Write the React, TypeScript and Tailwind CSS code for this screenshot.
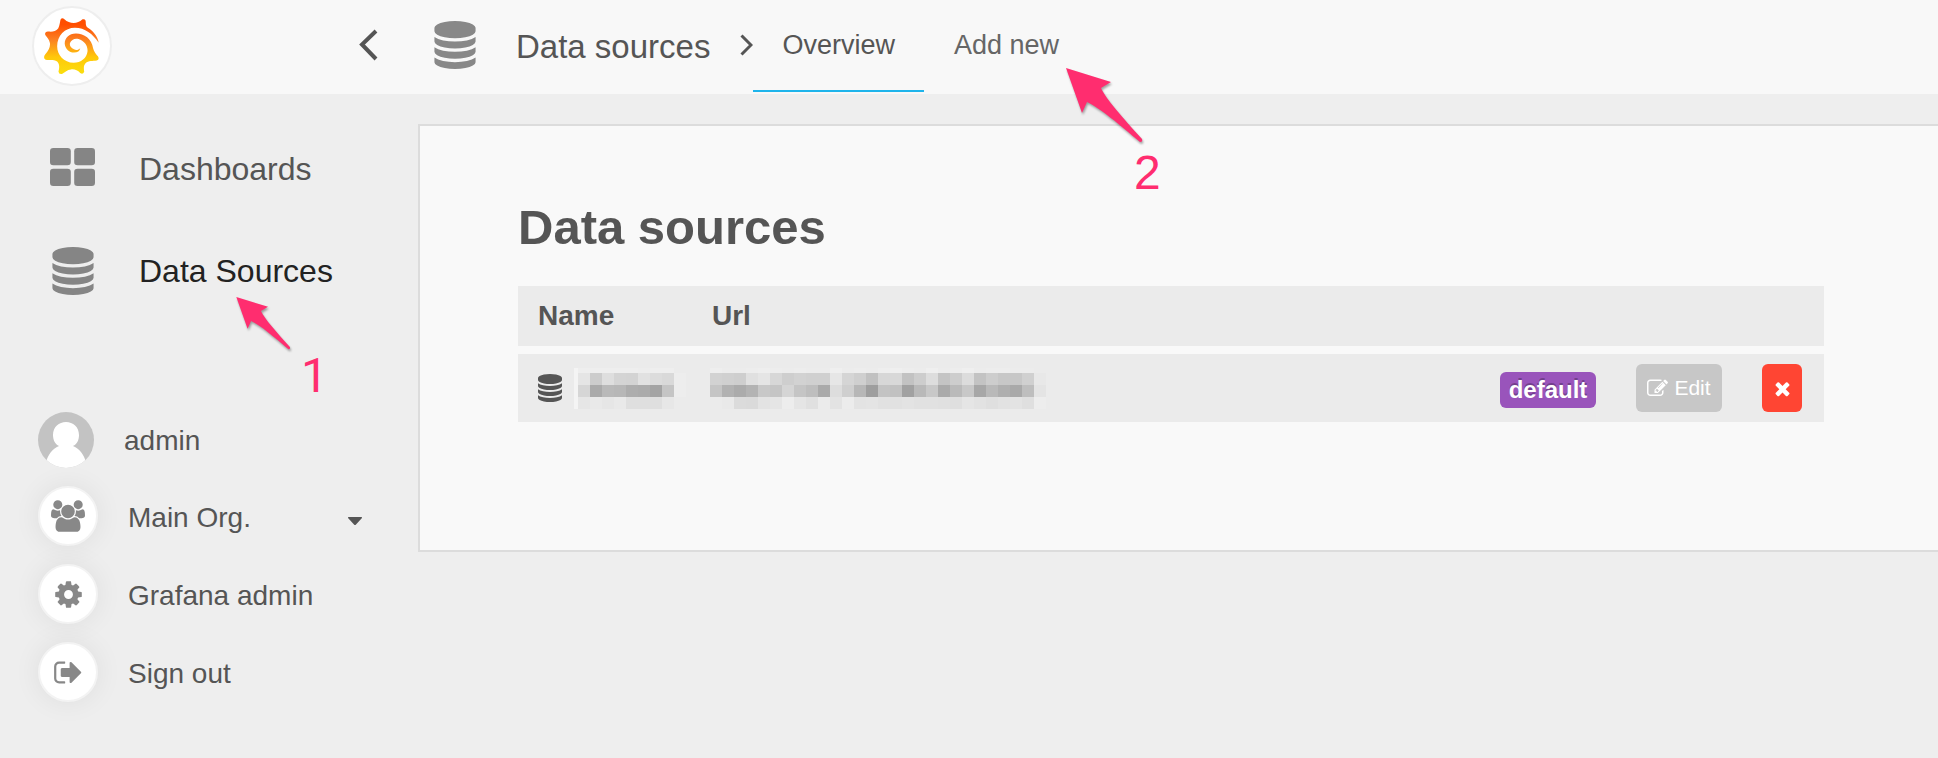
import type { ReactNode } from "react";

const databasePath =
  "M768 768q237 0 443-43t325-127v170q0 69-103 128t-280 93.5-385 34.5-385-34.5-280-93.5-103-128v-170q119 84 325 127t443 43zm0 768q237 0 443-43t325-127v170q0 69-103 128t-280 93.5-385 34.5-385-34.5-280-93.5-103-128v-170q119 84 325 127t443 43zm0-384q237 0 443-43t325-127v170q0 69-103 128t-280 93.5-385 34.5-385-34.5-280-93.5-103-128v-170q119 84 325 127t443 43zm0-1152q208 0 385 34.5t280 93.5 103 128v128q0 69-103 128t-280 93.5-385 34.5-385-34.5-280-93.5-103-128v-128q0-69 103-128t280-93.5 385-34.5z";
const usersPath =
  "M529 896q-162 5-265 128h-134q-82 0-138-40.5t-56-118.5q0-353 124-353 6 0 43.5 21t97.5 42.5 119 21.5q67 0 133-23-5 37-5 66 0 139 81 256zm1071 637q0 120-73 189.5t-194 69.5h-874q-121 0-194-69.5t-73-189.5q0-53 3.5-103.5t14-109 26.5-108.5 43-97.5 62-81 85.5-53.5 111.5-20q10 0 43 21.5t73 48 107 48 135 21.5 135-21.5 107-48 73-48 43-21.5q61 0 111.5 20t85.5 53.5 62 81 43 97.5 26.5 108.5 14 109 3.5 103.5zm-1024-1277q0 106-75 181t-181 75-181-75-75-181 75-181 181-75 181 75 75 181zm704 384q0 159-112.5 271.5t-271.5 112.5-271.5-112.5-112.5-271.5 112.5-271.5 271.5-112.5 271.5 112.5 112.5 271.5zm576 225q0 78-56 118.5t-138 40.5h-134q-103-123-265-128 81-117 81-256 0-29-5-66 66 23 133 23 59 0 119-21.5t97.5-42.5 43.5-21q124 0 124 353zm-128-609q0 106-75 181t-181 75-181-75-75-181 75-181 181-75 181 75 75 181z";
const cogPath =
  "M1152 896q0-106-75-181t-181-75-181 75-75 181 75 181 181 75 181-75 75-181zm512-109v222q0 12-8 23t-20 13l-185 28q-19 54-39 91 35 50 107 138 10 12 10 25t-9 23q-27 37-99 108t-94 71q-12 0-26-9l-138-108q-44 23-91 38-16 136-29 186-7 28-36 28h-222q-14 0-24.5-8.5t-11.5-21.5l-28-184q-49-16-90-37l-141 107q-10 9-25 9-14 0-25-11-126-114-165-168-7-10-7-23 0-12 8-23 15-21 51-66.5t54-70.5q-27-50-41-99l-183-27q-13-2-21-12.5t-8-23.5v-222q0-12 8-23t19-13l186-28q14-46 39-92-40-57-107-138-10-12-10-24 0-10 9-23 26-36 98.5-107.5t94.5-71.5q13 0 26 10l138 107q44-23 91-38 16-136 29-186 7-28 36-28h222q14 0 24.5 8.5t11.5 21.5l28 184q49 16 90 37l142-107q9-9 24-9 13 0 25 10 129 119 165 170 7 8 7 22 0 12-8 23-15 21-51 66.5t-54 70.5q26 50 41 98l183 28q13 2 21 12.5t8 23.5z";
const signOutPath =
  "M704 1440q0 4 1 20t.5 26.5-3 23.5-10 19.5-20.5 6.5h-320q-119 0-203.5-84.5t-84.5-203.5v-704q0-119 84.5-203.5t203.5-84.5h320q13 0 22.5 9.5t9.5 22.5q0 4 1 20t.5 26.5-3 23.5-10 19.5-20.5 6.5h-320q-66 0-113 47t-47 113v704q0 66 47 113t113 47h312l11.5 1 11.5 3 8 5.5 7 9 2 13.5zm928-544q0 26-19 45l-544 544q-19 19-45 19t-45-19-19-45v-288h-448q-26 0-45-19t-19-45v-384q0-26 19-45t45-19h448v-288q0-26 19-45t45-19 45 19l544 544q19 19 19 45z";
const editPath =
  "M888 1184l116-116-152-152-116 116v56h96v96h56zm440-720q-16-16-33 1l-350 350q-17 17-1 33t33-1l350-350q17-17 1-33zm80 594v190q0 119-84.5 203.5t-203.5 84.5h-832q-119 0-203.5-84.5t-84.5-203.5v-832q0-119 84.5-203.5t203.5-84.5h832q63 0 117 25 15 7 18 23 3 17-9 29l-49 49q-14 14-32 8-23-6-45-6h-832q-66 0-113 47t-47 113v832q0 66 47 113t113 47h832q66 0 113-47t47-113v-126q0-13 9-22l64-64q15-15 35-7t20 29zm-96-738l288 288-672 672h-288v-288zm444 132l-92 92-288-288 92-92q28-28 68-28t68 28l152 152q28 28 28 68t-28 68z";
const timesPath =
  "M1490 1322q0 40-28 68l-136 136q-28 28-68 28t-68-28l-294-294-294 294q-28 28-68 28t-68-28l-136-136q-28-28-28-68t28-68l294-294-294-294q-28-28-28-68t28-68l136-136q28-28 68-28t68 28l294 294 294-294q28-28 68-28t68 28l136 136q28 28 28 68t-28 68l-294 294 294 294q28 28 28 68z";

function Icon({ path, box = "0 0 1792 1792", className }: { path: string; box?: string; className: string }) {
  return (
    <svg viewBox={box} className={className} fill="currentColor" aria-hidden="true">
      <path d={path} />
    </svg>
  );
}

function Logo() {
  return (
    <svg viewBox="40 46 174 182" className="h-[60px] w-[58px]" aria-hidden="true">
      <defs>
        <linearGradient id="flame" gradientUnits="userSpaceOnUse" x1="0" y1="222" x2="0" y2="52">
          <stop offset="0" stopColor="#fade0e" />
          <stop offset="0.3" stopColor="#ffc80a" />
          <stop offset="0.62" stopColor="#fb7f22" />
          <stop offset="0.88" stopColor="#ff4e00" />
        </linearGradient>
      </defs>
      <path
        fill="url(#flame)"
        d="M208 127C205 106 190 90 172 79C167 74 170 66 168 60Q166 54 159 56C150 64 142 67 132 67C122 67 112 64 104 56Q97 49 92 57C90 66 90 74 85 84C77 94 66 94 54 93Q43 94 46 104C51 111 58 117 60 128C62 141 55 151 46 162Q38 172 47 179C58 181 72 177 82 184C90 192 89 204 86 214Q87 224 98 221C106 216 112 209 124 208C136 207 144 211 152 219Q160 225 164 215C163 206 161 197 168 189C177 181 190 183 202 181Q211 179 206 169C200 162 193 154 191 144C187 115 164 99 139 99C117 99 104 114 105 131C107 147 119 157 133 157C144 157 151 152 152 144C146 150 139 151 133 147C123 143 119 135 121 128C125 118 135 113 147 116C164 121 176 137 174 154C172 174 154 188 132 188C102 188 82 164 82 138C82 106 105 82 136 82C166 82 190 101 208 127Z"
      />
    </svg>
  );
}

function Arrow({ className }: { className: string }) {
  return (
    <svg viewBox="0 0 80 78" className={className} aria-hidden="true">
      <path
        fill="#ff2d6f"
        d="M0 0L45 14L35 20C40 31 57 50 76 71Q77 74 74 74C54 57 34 40 21 34L16 45Z"
      />
    </svg>
  );
}

const nameMosaic = [
  [238, 238, 238, 238, 238, 237, 238, 238, 235],
  [229, 204, 222, 212, 211, 225, 220, 217, 237],
  [214, 170, 185, 183, 173, 171, 164, 197, 237],
  [230, 233, 230, 233, 223, 223, 223, 231, 235],
];

const urlMosaic = [
  [238, 236, 236, 237, 238, 237, 236, 237, 236, 236, 239, 236, 237, 236, 238, 239, 237, 236, 239, 236, 237, 239, 236, 237, 237, 236, 236, 235],
  [210, 208, 206, 224, 229, 215, 206, 210, 208, 208, 230, 213, 207, 193, 215, 216, 194, 205, 221, 196, 205, 220, 195, 205, 199, 199, 208, 232],
  [197, 178, 171, 179, 200, 197, 213, 197, 190, 170, 221, 207, 183, 158, 195, 193, 161, 185, 200, 170, 186, 200, 167, 185, 175, 169, 190, 228],
  [235, 233, 219, 218, 227, 229, 237, 229, 224, 235, 227, 236, 227, 228, 225, 225, 227, 225, 225, 224, 223, 229, 226, 223, 226, 227, 223, 237],
];

function Mosaic({ rows, className }: { rows: number[][]; className: string }) {
  const tops = [0, 5, 17, 29];
  const heights = [5, 12, 12, 12];
  return (
    <svg viewBox={`0 0 ${rows[0].length * 12} 41`} shapeRendering="crispEdges" className={className} aria-hidden="true">
      {rows.map((row, r) =>
        row.map((v, c) => (
          <rect key={`${r}-${c}`} x={c * 12} y={tops[r]} width={12} height={heights[r]} fill={`rgb(${v},${v},${v})`} />
        )),
      )}
    </svg>
  );
}

function RoundIcon({ children }: { children: ReactNode }) {
  return (
    <span className="mb-0.5 flex size-[60px] items-center justify-center rounded-full border-2 border-[#f3f3f3] bg-white text-[#888888] shadow-[0_0_28px_rgba(0,0,0,0.07)]">
      {children}
    </span>
  );
}

export default function App() {
  return (
    <div className="min-h-screen overflow-hidden bg-[#eeeeee] font-['Liberation_Sans',Arial,sans-serif] text-[#555555]">
      <header className="flex h-[94px] bg-[#f8f8f8]">
        <div className="flex h-[90px] w-[434px] shrink-0 items-center justify-between pr-14 pl-8">
          <a
            href="#home"
            aria-label="Home"
            className="mt-0.5 flex size-20 items-center justify-center rounded-full border-2 border-[#eeeeee] bg-white"
          >
            <Logo />
          </a>
          <button type="button" aria-label="Close menu" className="p-0">
            <svg viewBox="0 0 20 32" className="h-8 w-5" fill="none" stroke="#555555" strokeWidth="4" aria-hidden="true">
              <path d="M18 2L4 15.500L18 30" />
            </svg>
          </button>
        </div>
        <div className="flex items-center">
          <Icon path={databasePath} box="0 0 1536 1792" className="mb-1 h-12 w-[42px] text-[#888888]" />
          <a href="#datasources" className="ml-10 text-[33px]">
            Data sources
          </a>
          <svg viewBox="0 0 13 22" className="mb-1 ml-[30px] h-[22px] w-[13px]" fill="none" stroke="#555555" strokeWidth="3" aria-hidden="true">
            <path d="M1.500 1.500L11 11L1.500 20.500" />
          </svg>
        </div>
        <nav aria-label="Data sources" className="flex h-[92px] text-[27px]">
          <a href="#overview" className="flex items-center border-b-2 border-[#1eb4eb] px-[29px]">
            Overview
          </a>
          <a href="#new" className="relative flex items-center border-b-2 border-transparent px-[30px] text-[#666666]">
            Add new
            <span className="absolute top-[68px] left-[142px] w-24 text-[#ff2d6f]">
              <Arrow className="h-[78px] w-20 drop-shadow-[1px_2px_1px_rgba(0,0,0,0.35)]" />
              <span className="block pl-[68px] text-[48px] leading-[54px]">2</span>
            </span>
          </a>
        </nav>
      </header>

      <div className="flex items-start">
        <aside className="w-[418px] shrink-0 pt-6">
          <nav aria-label="Main" className="text-[32px]">
            <a href="#dashboards" className="flex h-[102px] items-center pl-[50px]">
              <svg viewBox="0 0 45 38" className="mb-1 h-[38px] w-[45px]" fill="#858585" aria-hidden="true">
                <rect width="20.800" height="17.300" rx="3.300" />
                <rect x="24.200" width="20.800" height="17.300" rx="3.300" />
                <rect y="20.700" width="20.800" height="17.300" rx="3.300" />
                <rect x="24.200" y="20.700" width="20.800" height="17.300" rx="3.300" />
              </svg>
              <span className="ml-11">Dashboards</span>
            </a>
            <a href="#datasources" className="relative flex h-[102px] items-center pl-[52px] text-[#222222]">
              <Icon path={databasePath} box="0 0 1536 1792" className="h-12 w-[42px] text-[#858585]" />
              <span className="ml-[45px]">Data Sources</span>
              <span className="absolute top-[77px] left-[236px] w-24 text-[#ff2d6f]">
                <Arrow className="h-[55px] w-[57px] drop-shadow-[1px_2px_1px_rgba(0,0,0,0.35)]" />
                <span className="block pl-[65px] font-[Roboto,sans-serif] text-[48px] leading-[48px]">1</span>
              </span>
            </a>
          </nav>

          <nav aria-label="Account" className="mt-20 pl-[38px] text-[28px]">
            <a href="#profile" className="flex h-[76px] items-center">
              <svg viewBox="0 0 56 56" className="size-14" aria-hidden="true">
                <defs>
                  <clipPath id="avatar">
                    <circle cx="28" cy="28" r="28" />
                  </clipPath>
                </defs>
                <g clipPath="url(#avatar)">
                  <rect width="56" height="56" fill="#c3c3c3" />
                  <path
                    fill="#ffffff"
                    d="M28 10C35 10 41 15 41 23C41 28 39 32 35 34C42 37 46 43 48 50V56H8V50C10 43 14 37 21 34C17 32 15 28 15 23C15 15 21 10 28 10Z"
                  />
                </g>
              </svg>
              <span className="mt-0.5 ml-[30px]">admin</span>
            </a>
            <button type="button" className="flex h-[78px] w-full items-center pr-14">
              <RoundIcon>
                <Icon path={usersPath} box="-64 0 1920 1792" className="h-8 w-[34px]" />
              </RoundIcon>
              <span className="mt-0.5 ml-[30px]">Main Org.</span>
              <svg viewBox="0 0 14 8" className="mt-2 ml-auto h-2 w-3.5" fill="#555555" aria-hidden="true">
                <path d="M1 0H13Q15 0 13.500 1.500L8 7.500Q7 8.500 6 7.500L.5 1.500Q-1 0 1 0Z" />
              </svg>
            </button>
            <a href="#admin" className="flex h-[78px] items-center">
              <RoundIcon>
                <Icon path={cogPath} className="size-[31px]" />
              </RoundIcon>
              <span className="mt-0.5 ml-[30px]">Grafana admin</span>
            </a>
            <a href="#logout" className="flex h-[78px] items-center">
              <RoundIcon>
                <Icon path={signOutPath} className="size-[31px]" />
              </RoundIcon>
              <span className="mt-0.5 ml-[30px]">Sign out</span>
            </a>
          </nav>
        </aside>

        <main className="mt-[30px] flex-1 border-y-2 border-l-2 border-[#dcdcdc] bg-[#f9f9f9] pt-[71px] pr-[114px] pb-32 pl-[98px]">
          <h1 className="text-[49px] leading-[60px] font-bold">Data sources</h1>
          <table className="mt-[29px] w-full border-collapse text-left text-[28px]">
            <thead>
              <tr className="h-16 bg-[#ebebeb]">
                <th scope="col" className="w-[174px] p-0 pl-5 font-bold">
                  Name
                </th>
                <th scope="col" className="p-0 pl-5 font-bold">
                  Url
                </th>
                <td colSpan={3} />
              </tr>
            </thead>
            <tbody>
              <tr className="h-[72px] border-t-8 border-[#f9f9f9] bg-[#ebebeb]">
                <td className="p-0 pl-5">
                  <span className="flex items-center">
                    <Icon path={databasePath} box="0 0 1536 1792" className="h-7 w-6 shrink-0" />
                    <Mosaic rows={nameMosaic} className="ml-3 h-[41px] w-28 shrink-0 border-l-4 border-[#f4f4f4]" />
                  </span>
                </td>
                <td className="p-0 pl-[18px]">
                  <Mosaic rows={urlMosaic} className="h-[41px] w-[336px]" />
                </td>
                <td className="w-[116px] p-0">
                  <span className="mt-1 flex h-9 w-24 items-center justify-center rounded-md bg-[#9954bb] text-[24px] font-bold text-white [text-shadow:0_-2px_0_rgba(0,0,0,0.25)]">
                    default
                  </span>
                </td>
                <td className="w-[126px] p-0 pl-5">
                  <button
                    type="button"
                    className="flex h-12 w-[86px] items-center justify-center gap-1.5 rounded-md bg-[#c7c7c7] text-[21px] text-white"
                  >
                    <Icon path={editPath} className="size-[21px]" />
                    Edit
                  </button>
                </td>
                <td className="w-[82px] p-0 pl-5">
                  <button
                    type="button"
                    aria-label="Delete"
                    className="flex h-12 w-10 items-center justify-center rounded-md bg-[#ff4533] text-white"
                  >
                    <Icon path={timesPath} className="size-[21px]" />
                  </button>
                </td>
              </tr>
            </tbody>
          </table>
        </main>
      </div>
    </div>
  );
}
